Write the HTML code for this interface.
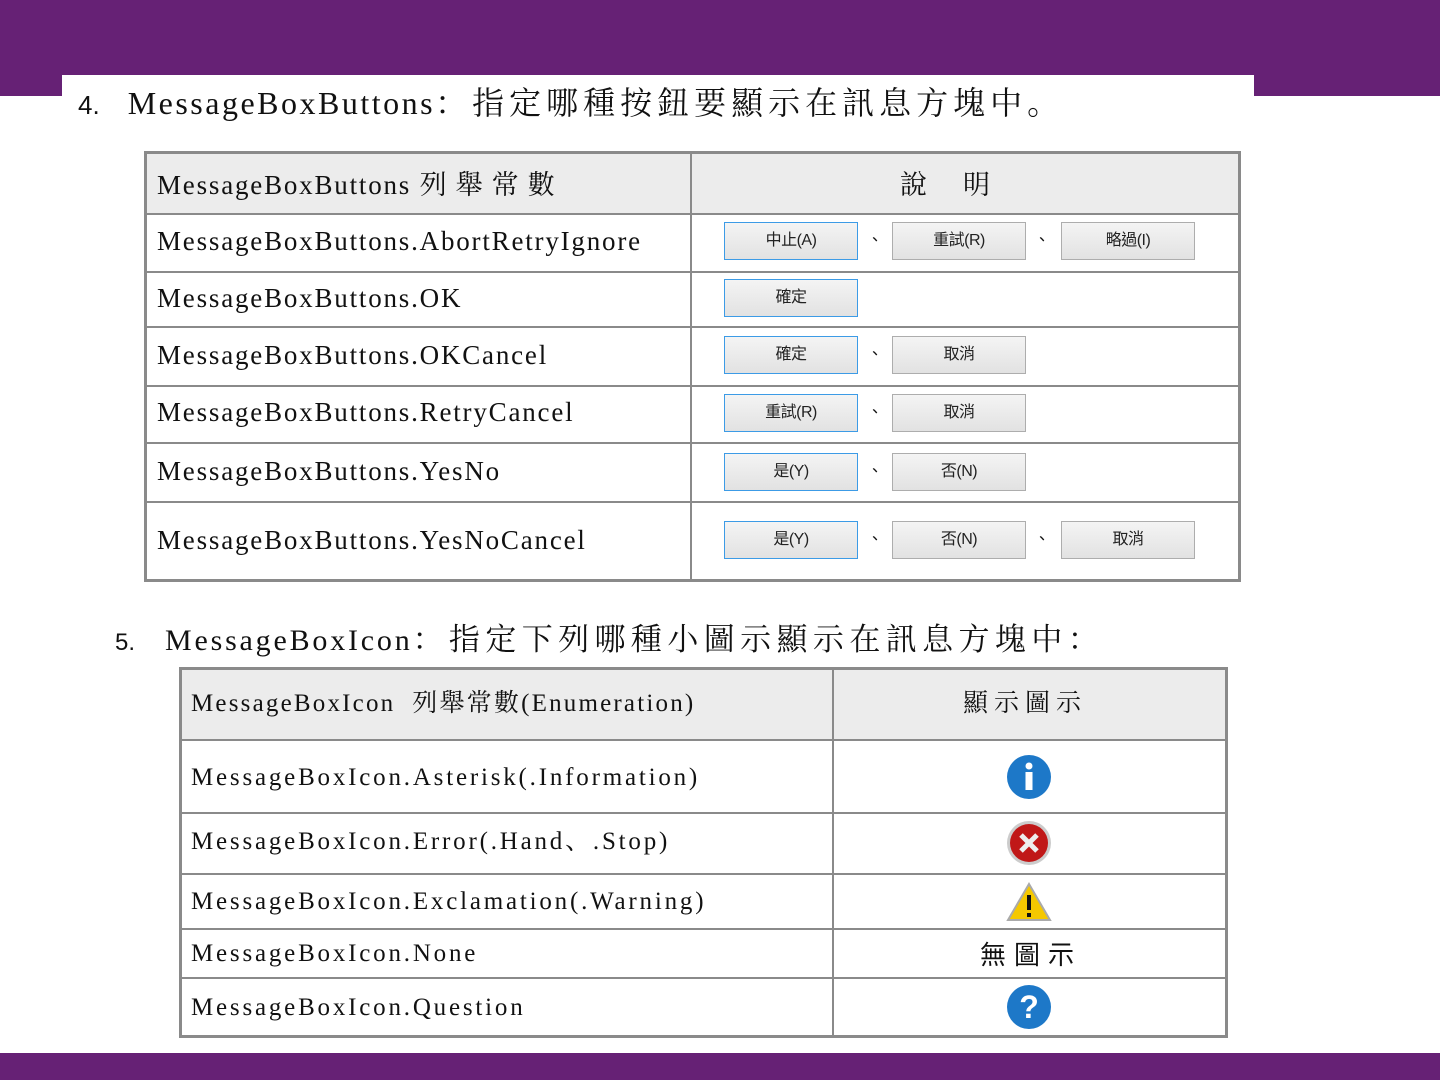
<!DOCTYPE html>
<html><head><meta charset="utf-8"><style>
body{margin:0;width:1440px;height:1080px;position:relative;background:#fff;overflow:hidden;font-family:"Liberation Serif","Noto Serif CJK SC",serif;color:#111}
.a{position:absolute}
.t{position:absolute;white-space:nowrap}
.hl{position:absolute;height:2px;background:#8a8a8a}
.vl{position:absolute;width:2px;background:#8a8a8a}
.b{position:absolute;width:132px;height:36px;background:linear-gradient(#f4f4f4,#e2e2e2);border:1px solid #adadad;font:16px "Liberation Sans","Noto Sans CJK TC",sans-serif;text-align:center;line-height:36px;color:#222;letter-spacing:-0.5px}
.b.f{border:1px solid #3c9be6}
.s{position:absolute;font:16px "Noto Sans CJK TC",sans-serif}
.c1{font-size:27px;letter-spacing:1.8px}
.c2{font-size:25px;letter-spacing:2.8px}
.cj{font-family:"Noto Serif CJK SC",serif}
</style></head><body>
<div class="a" style="left:0;top:0;width:1440px;height:96px;background:#662175"></div>
<div class="a" style="left:62px;top:75px;width:1192px;height:30px;background:#fff"></div>
<div class="a" style="left:0;top:1053px;width:1440px;height:27px;background:#662175"></div>

<div class="t" style="left:78px;top:78px;font-size:32px"><span style="font-family:'Liberation Sans',sans-serif;font-size:26px">4.</span><span style="display:inline-block;width:28px"></span><span style="letter-spacing:2.5px">MessageBoxButtons</span><span class="cj" style="font-size:32px;letter-spacing:5px">：指定哪種按鈕要顯示在訊息方塊中。</span></div>

<!-- table 1 -->
<div class="a" style="left:144px;top:151px;width:1097px;height:63px;background:#ececec"></div>
<div class="hl" style="left:144px;top:151px;width:1097px;height:3px"></div>
<div class="hl" style="left:144px;top:213px;width:1097px"></div>
<div class="hl" style="left:144px;top:271px;width:1097px"></div>
<div class="hl" style="left:144px;top:326px;width:1097px"></div>
<div class="hl" style="left:144px;top:385px;width:1097px"></div>
<div class="hl" style="left:144px;top:442px;width:1097px"></div>
<div class="hl" style="left:144px;top:501px;width:1097px"></div>
<div class="hl" style="left:144px;top:579px;width:1097px;height:3px"></div>
<div class="vl" style="left:144px;top:151px;height:431px;width:3px"></div>
<div class="vl" style="left:690px;top:151px;height:431px"></div>
<div class="vl" style="left:1238px;top:151px;height:431px;width:3px"></div>
<div class="t c1" style="left:157px;top:163px">MessageBoxButtons <span style="letter-spacing:9px">列舉常數</span></div>
<div class="t c1" style="left:900px;top:163px">說&nbsp;&nbsp;&nbsp;&nbsp;明</div>
<div class="t c1" style="left:157px;top:226px">MessageBoxButtons.AbortRetryIgnore</div>
<div class="t c1" style="left:157px;top:283px">MessageBoxButtons.OK</div>
<div class="t c1" style="left:157px;top:340px">MessageBoxButtons.OKCancel</div>
<div class="t c1" style="left:157px;top:397px">MessageBoxButtons.RetryCancel</div>
<div class="t c1" style="left:157px;top:456px">MessageBoxButtons.YesNo</div>
<div class="t c1" style="left:157px;top:525px">MessageBoxButtons.YesNoCancel</div>

<div class="b f" style="left:724px;top:222px">中止(A)</div><div class="s" style="left:867px;top:226px">、</div>
<div class="b" style="left:892px;top:222px">重試(R)</div><div class="s" style="left:1034px;top:226px">、</div>
<div class="b" style="left:1061px;top:222px">略過(I)</div>
<div class="b f" style="left:724px;top:279px">確定</div>
<div class="b f" style="left:724px;top:336px">確定</div><div class="s" style="left:867px;top:340px">、</div>
<div class="b" style="left:892px;top:336px">取消</div>
<div class="b f" style="left:724px;top:394px">重試(R)</div><div class="s" style="left:867px;top:398px">、</div>
<div class="b" style="left:892px;top:394px">取消</div>
<div class="b f" style="left:724px;top:453px">是(Y)</div><div class="s" style="left:867px;top:457px">、</div>
<div class="b" style="left:892px;top:453px">否(N)</div>
<div class="b f" style="left:724px;top:521px">是(Y)</div><div class="s" style="left:867px;top:525px">、</div>
<div class="b" style="left:892px;top:521px">否(N)</div><div class="s" style="left:1034px;top:525px">、</div>
<div class="b" style="left:1061px;top:521px">取消</div>

<div class="t" style="left:115px;top:614px;font-size:30px"><span style="font-family:'Liberation Sans',sans-serif;font-size:24px">5.</span><span style="display:inline-block;width:30px"></span><span style="letter-spacing:2.8px">MessageBoxIcon</span><span class="cj" style="font-size:31px;letter-spacing:5.4px">：指定下列哪種小圖示顯示在訊息方塊中：</span></div>

<!-- table 2 -->
<div class="a" style="left:179px;top:667px;width:1048px;height:73px;background:#ececec"></div>
<div class="hl" style="left:179px;top:667px;width:1048px;height:3px"></div>
<div class="hl" style="left:179px;top:739px;width:1048px"></div>
<div class="hl" style="left:179px;top:812px;width:1048px"></div>
<div class="hl" style="left:179px;top:873px;width:1048px"></div>
<div class="hl" style="left:179px;top:928px;width:1048px"></div>
<div class="hl" style="left:179px;top:977px;width:1048px"></div>
<div class="hl" style="left:179px;top:1035px;width:1048px;height:3px"></div>
<div class="vl" style="left:179px;top:667px;height:371px;width:3px"></div>
<div class="vl" style="left:832px;top:667px;height:371px"></div>
<div class="vl" style="left:1225px;top:667px;height:371px;width:3px"></div>
<div class="t c2" style="left:191px;top:683px;letter-spacing:2.2px">MessageBoxIcon&nbsp; 列舉常數(Enumeration)</div>
<div class="t c2" style="left:963px;top:683px;letter-spacing:6px">顯示圖示</div>
<div class="t c2" style="left:191px;top:764px">MessageBoxIcon.Asterisk(.Information)</div>
<div class="t c2" style="left:191px;top:821px">MessageBoxIcon.Error(.Hand、.Stop)</div>
<div class="t c2" style="left:191px;top:888px">MessageBoxIcon.Exclamation(.Warning)</div>
<div class="t c2" style="left:191px;top:940px">MessageBoxIcon.None</div>
<div class="t c2" style="left:191px;top:994px">MessageBoxIcon.Question</div>
<div class="t" style="left:980px;top:935px;font:26px 'Noto Sans CJK TC',sans-serif;letter-spacing:8px">無圖示</div>

<svg class="a" style="left:1006px;top:754px" width="46" height="46" viewBox="0 0 46 46"><circle cx="23" cy="23" r="22" fill="#1d78c8"/><circle cx="23" cy="12" r="3.5" fill="#fff"/><rect x="19.5" y="18" width="7" height="18" fill="#fff"/></svg>
<svg class="a" style="left:1005px;top:820px" width="48" height="46" viewBox="0 0 48 46"><circle cx="24" cy="23" r="22" fill="#ccc"/><circle cx="24" cy="23" r="19" fill="#c01818"/><path d="M16 15 L32 31 M32 15 L16 31" stroke="#eee" stroke-width="5"/></svg>
<svg class="a" style="left:1006px;top:882px" width="46" height="40" viewBox="0 0 46 40"><path d="M23 2 L44 38 L2 38 Z" fill="#f5c800" stroke="#aaa" stroke-width="2"/><rect x="21" y="13" width="4" height="15" fill="#111"/><rect x="21" y="31" width="4" height="4" fill="#111"/></svg>
<svg class="a" style="left:1006px;top:984px" width="46" height="46" viewBox="0 0 46 46"><circle cx="23" cy="23" r="22" fill="#1d78c8"/><text x="23" y="34" text-anchor="middle" font-family="Liberation Sans" font-weight="bold" font-size="32" fill="#fff">?</text></svg>
</body></html>
